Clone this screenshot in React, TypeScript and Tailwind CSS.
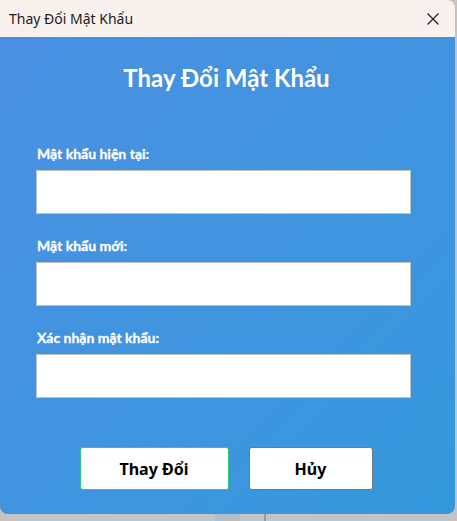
import React from "react";

const fields = ["Mật khẩu hiện tại:", "Mật khẩu mới:", "Xác nhận mật khẩu:"];

export default function App() {
  return (
    <div className="w-[457px] h-[521px] bg-[#c4c4c4] flex flex-col overflow-hidden" style={{ fontFamily: '"Noto Sans", "Open Sans", sans-serif' }}>
      <div className="w-[455px] h-[514px] flex flex-col rounded-b-lg rounded-tr-lg overflow-hidden">
        <div className="h-[37px] shrink-0 bg-[#f9f1ee] flex items-center justify-between pl-[9px] pr-[16px]">
          <span className="text-[14px] text-[#1b1b1b]">Thay Đổi Mật Khẩu</span>
          <svg width="12" height="12" viewBox="0 0 12 12" className="text-[#1b1b1b]">
            <path d="M0.5 0.5 L11.5 11.5 M11.5 0.5 L0.5 11.5" stroke="currentColor" strokeWidth="1.1" />
          </svg>
        </div>
        <div className="flex-1 bg-gradient-to-br from-[#4a90e2] to-[#3498db] flex flex-col px-[36px] pt-[25px]">
          <h1 className="text-center text-white font-bold text-[24px] leading-[32px] font-['Lato',sans-serif] pr-[2px]">Thay Đổi Mật Khẩu</h1>
          <div className="flex flex-col gap-[22px] mt-[50px]">
            {fields.map((f) => (
              <div key={f} className="flex flex-col gap-[6px]">
                <label className="text-white font-bold text-[14px] leading-[20px] pl-[1px] font-['Lato',sans-serif] [-webkit-text-stroke:0.3px_white]">{f}</label>
                <input type="password" className="w-[375px] h-[44px] bg-white border border-[#c2c2c2] outline-none" />
              </div>
            ))}
          </div>
          <div className="flex justify-center gap-[20px] mt-[49px] pr-[3px]">
            <button className="w-[149px] h-[43px] bg-white border border-[#2ecc71] rounded-[3px] font-bold text-[16px] text-black">Thay Đổi</button>
            <button className="w-[124px] h-[43px] bg-white border border-[#777777] rounded-[3px] font-bold text-[16px] text-black">Hủy</button>
          </div>
        </div>
      </div>
      <div className="flex h-[7px]">
        <div className="w-[215px] bg-[#c4c4c4]" />
        <div className="w-[25px] bg-[#b3bfc6]" />
        <div className="w-[24px] bg-[#c4c4c4]" />
        <div className="w-[2px] bg-[#9a9a9a]" />
        <div className="flex-1 bg-[#c4c4c4]" />
      </div>
    </div>
  );
}
